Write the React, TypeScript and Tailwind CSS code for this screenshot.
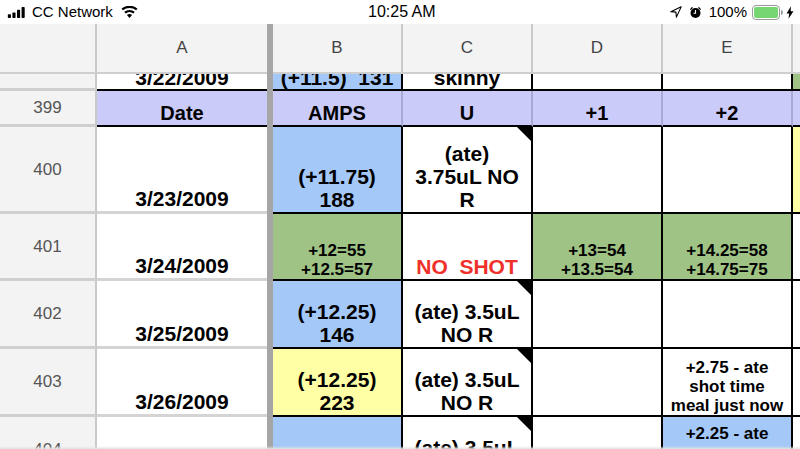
import type { ReactNode } from 'react'

const COLS = 'grid grid-cols-[97px_170px_6px_130px_130px_130px_130px_7px]'

type CellProps = {
  bg?: string
  className?: string
  note?: boolean
  line?: string
  children?: ReactNode
}

/** A sheet cell: black grid lines right and below, text pinned to the bottom. */
function Cell({ bg = 'bg-white', className = 'justify-end', note, line = 'border-b-2 border-r-2 border-b-black border-r-black', children }: CellProps) {
  return (
    <div className={`relative flex min-w-0 flex-col items-center overflow-hidden text-center font-bold text-black ${line} ${bg} ${className}`}>
      {children}
      {note && <span className="absolute right-0 top-0 h-[14px] w-[14px] bg-black [clip-path:polygon(0_0,100%_0,100%_100%)]" />}
    </div>
  )
}

function RowNum({ n }: { n?: string }) {
  return (
    <div className="flex items-center justify-center border-b-[3px] border-r-2 border-b-[#cfcfcf] border-r-[#c9c9c9] bg-[#f3f3f3] pt-[1px] text-[17px] text-[#555]">
      {n}
    </div>
  )
}

function DateCell({ children, line = 'border-b-[3px] border-b-[#d4d4d4]' }: { children?: ReactNode; line?: string }) {
  return (
    <Cell line={line} className="justify-end text-[21px] leading-[24px]">
      {children}
    </Cell>
  )
}

const Divider = () => <div className="bg-[#a6a6a6]" />

function ColHead({ label, wide }: { label?: string; wide?: boolean }) {
  return (
    <div className={`flex items-center justify-center border-b-2 border-b-[#cfcfcf] bg-[#f3f3f3] text-[17px] text-[#444] ${wide ? '' : 'border-r-2 border-r-[#c9c9c9]'}`}>
      {label}
    </div>
  )
}

function HeadCell({ children }: { children?: ReactNode }) {
  return (
    <Cell
      bg="bg-[#cbcbf9]"
      line="border-b-2 border-r-2 border-b-black border-r-[#a9a9d6]"
      className="justify-center pt-[9px] text-[20px] leading-[24px]"
    >
      {children}
    </Cell>
  )
}

const big = 'justify-end pb-[1px] text-[21px] leading-[23px]'
const small = 'justify-end text-[17px] leading-[19px]'

function StatusBar() {
  return (
    <div className="flex h-[24px] items-center justify-between bg-white pl-[7px] pr-[6px] text-[15px] text-black">
      <div className="flex items-center gap-[5px]">
        <svg width="20" height="11" viewBox="0 0 20 12" fill="currentColor">
          <rect x="0" y="8" width="3.4" height="4" rx="0.8" />
          <rect x="5" y="6" width="3.4" height="6" rx="0.8" />
          <rect x="10" y="3" width="3.4" height="9" rx="0.8" />
          <rect x="15" y="0" width="3.4" height="12" rx="0.8" />
        </svg>
        <span className="font-['Liberation_Sans',sans-serif]">CC Network</span>
        <svg className="ml-[3px]" width="17" height="12" viewBox="0 0 18 13" fill="currentColor">
          <path d="M9 13 6.2 9.7a4.4 4.4 0 0 1 5.6 0Z" />
          <path d="M4.8 8.1 3.3 6.3a8.9 8.9 0 0 1 11.4 0l-1.5 1.8a6.6 6.6 0 0 0-8.4 0Z" />
          <path d="M1.9 4.7.3 2.9a13.4 13.4 0 0 1 17.4 0l-1.6 1.8a11 11 0 0 0-14.2 0Z" />
        </svg>
      </div>
      <span className="absolute left-[368px] text-[16px] font-medium">10:25 AM</span>
      <div className="flex items-center">
        <svg width="12" height="12" viewBox="0 0 14 14" fill="none" stroke="currentColor" strokeWidth="1.3" strokeLinejoin="round">
          <path d="M13 1 1 6.6l5.9.6.6 5.8Z" />
        </svg>
        <svg className="ml-[7px]" width="13" height="13" viewBox="0 0 14 14" fill="currentColor">
          <circle cx="7" cy="7.6" r="5.4" />
          <path d="M1 3.4 3.2 1l1.2 1L2 4.4ZM13 3.4 10.8 1 9.6 2 12 4.4Z" />
          <path d="M7 4.4v3.4H4.8" fill="none" stroke="white" strokeWidth="1.2" />
        </svg>
        <span className="ml-[7px]">100%</span>
        <svg className="ml-[5px]" width="32" height="15" viewBox="0 0 32 15">
          <rect x="0.5" y="0.5" width="27" height="14" rx="3.500" fill="none" stroke="#9a9a9a" />
          <rect x="2" y="2" width="24" height="11" rx="2" fill="#76d672" />
          <path d="M29 5v5c1.400-.3 2-1.300 2-2.500s-.6-2.200-2-2.500Z" fill="#9a9a9a" />
        </svg>
        <svg className="ml-[2px]" width="8" height="13" viewBox="0 0 9 14" fill="currentColor">
          <path d="M5.600 0 .6 8h3L2.800 14 8.400 5.600H5.200Z" />
        </svg>
      </div>
    </div>
  )
}

export default function App() {
  return (
    <div className="relative h-[449px] w-[800px] overflow-hidden bg-white font-['Liberation_Sans',Arial,sans-serif]">
      <StatusBar />

      <div className={`${COLS} h-[50px]`}>
        <ColHead />
        <ColHead label="A" wide />
        <div className="bg-[#a6a6a6]" />
        <ColHead label="B" />
        <ColHead label="C" />
        <ColHead label="D" />
        <ColHead label="E" />
        <ColHead wide />
      </div>

      {/* partly scrolled-off row above 399 */}
      <div className={`${COLS} h-[17px]`}>
        <RowNum />
        <DateCell line="border-b-2 border-b-black">
          <span className="-mb-[1px]">3/22/2009</span>
        </DateCell>
        <Divider />
        <Cell bg="bg-[#a4c8f8]" className="justify-end text-[21px] leading-[23px]">(+11.5)&nbsp;&nbsp;131</Cell>
        <Cell className="justify-end text-[21px] leading-[23px]">skinny</Cell>
        <Cell />
        <Cell />
        <Cell bg="bg-[#9fc285]" line="border-b-2 border-b-black" />
      </div>

      <div className={`${COLS} h-[36px]`}>
        <RowNum n="399" />
        <Cell bg="bg-[#cbcbf9]" line="border-b-2 border-b-black" className="justify-center pt-[9px] text-[20px] leading-[24px]">
          Date
        </Cell>
        <Divider />
        <HeadCell>AMPS</HeadCell>
        <HeadCell>U</HeadCell>
        <HeadCell>+1</HeadCell>
        <HeadCell>+2</HeadCell>
        <Cell bg="bg-[#cbcbf9]" line="border-b-2 border-b-black" />
      </div>

      <div className={`${COLS} h-[87px]`}>
        <RowNum n="400" />
        <DateCell>3/23/2009</DateCell>
        <Divider />
        <Cell bg="bg-[#a4c8f8]" className={big}>
          <span>(+11.75)</span>
          <span>188</span>
        </Cell>
        <Cell note className={big}>
          <span>(ate)</span>
          <span>3.75uL NO</span>
          <span>R</span>
        </Cell>
        <Cell />
        <Cell />
        <Cell bg="bg-[#ffffa6]" line="border-b-2 border-b-black" />
      </div>

      <div className={`${COLS} h-[67px]`}>
        <RowNum n="401" />
        <DateCell>3/24/2009</DateCell>
        <Divider />
        <Cell bg="bg-[#9fc285]" className={small}>
          <span>+12=55</span>
          <span>+12.5=57</span>
        </Cell>
        <Cell className="justify-end text-[21px] leading-[24px]">
          <span className="whitespace-pre text-[#f0302a]">NO  SHOT</span>
        </Cell>
        <Cell bg="bg-[#9fc285]" className={small}>
          <span>+13=54</span>
          <span>+13.5=54</span>
        </Cell>
        <Cell bg="bg-[#9fc285]" className={small}>
          <span>+14.25=58</span>
          <span>+14.75=75</span>
        </Cell>
        <Cell line="border-b-2 border-b-black" />
      </div>

      <div className={`${COLS} h-[68px]`}>
        <RowNum n="402" />
        <DateCell>3/25/2009</DateCell>
        <Divider />
        <Cell bg="bg-[#a4c8f8]" className={big}>
          <span>(+12.25)</span>
          <span>146</span>
        </Cell>
        <Cell note className={big}>
          <span>(ate) 3.5uL</span>
          <span>NO R</span>
        </Cell>
        <Cell />
        <Cell />
        <Cell line="border-b-2 border-b-black" />
      </div>

      <div className={`${COLS} h-[68px]`}>
        <RowNum n="403" />
        <DateCell>3/26/2009</DateCell>
        <Divider />
        <Cell bg="bg-[#ffffa6]" className={big}>
          <span>(+12.25)</span>
          <span>223</span>
        </Cell>
        <Cell note className={big}>
          <span>(ate) 3.5uL</span>
          <span>NO R</span>
        </Cell>
        <Cell />
        <Cell className={small}>
          <span>+2.75 - ate</span>
          <span>shot time</span>
          <span>meal just now</span>
        </Cell>
        <Cell line="border-b-2 border-b-black" />
      </div>

      {/* runs past the bottom of the screen, so its number sits on the edge */}
      <div className={`${COLS} h-[68px]`}>
        <RowNum n="404" />
        <DateCell />
        <Divider />
        <Cell bg="bg-[#a4c8f8]" />
        <Cell note className="justify-start pt-[19px] text-[21px] leading-[23px]">
          (ate) 3.5uL
        </Cell>
        <Cell />
        <Cell bg="bg-[#a4c8f8]" className="justify-start pt-[7px] text-[17px] leading-[19px]">
          +2.25 - ate
        </Cell>
        <Cell line="" />
      </div>

      <div className="absolute bottom-0 left-0 h-[3px] w-full bg-gradient-to-b from-transparent to-[#e4e4e4]" />
    </div>
  )
}
